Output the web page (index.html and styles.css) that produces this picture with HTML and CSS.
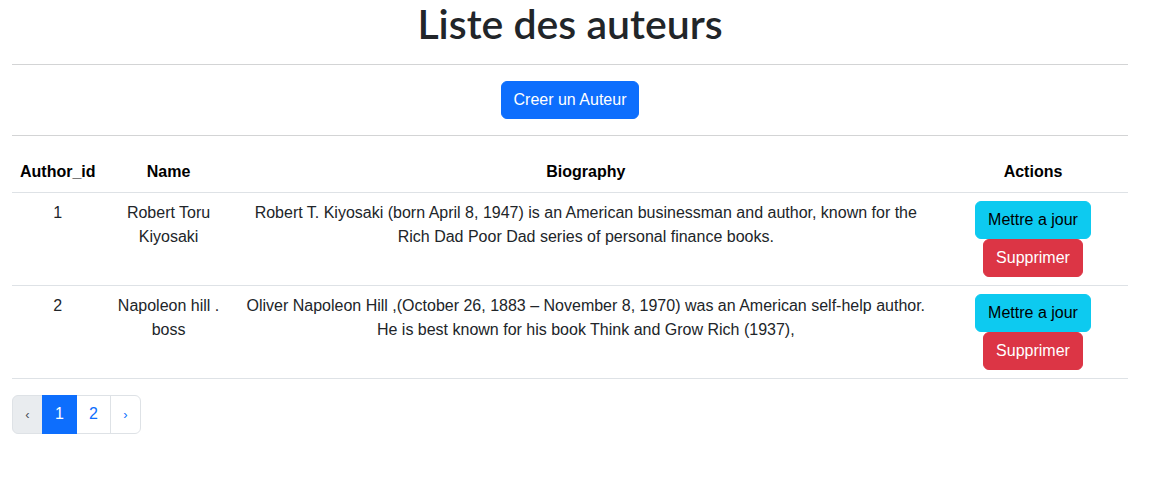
FILE: index.html
```html
<!DOCTYPE html>
<html lang="fr">
<head>
<meta charset="utf-8">
<title>Liste des auteurs</title>
<link rel="stylesheet" href="styles.css">
</head>
<body>
<div class="container">
  <h1 class="title">Liste des auteurs</h1>
  <hr class="sep">
  <div class="create">
    <a class="btn btn-primary" href="#">Creer un Auteur</a>
  </div>
  <hr class="sep">
  <table class="table">
    <thead>
      <tr>
        <th class="c-id">Author_id</th>
        <th class="c-name">Name</th>
        <th class="c-bio">Biography</th>
        <th class="c-act">Actions</th>
      </tr>
    </thead>
    <tbody>
      <tr>
        <td>1</td>
        <td>Robert Toru Kiyosaki</td>
        <td>Robert T. Kiyosaki (born April 8, 1947) is an American businessman and author, known for the Rich Dad Poor Dad series of personal finance books.</td>
        <td>
          <div class="actions">
            <a class="btn btn-info" href="#">Mettre a jour</a>
            <button class="btn btn-danger" type="button">Supprimer</button>
          </div>
        </td>
      </tr>
      <tr>
        <td>2</td>
        <td>Napoleon hill . boss</td>
        <td>Oliver Napoleon Hill ,(October 26, 1883 – November 8, 1970) was an American self-help author. He is best known for his book Think and Grow Rich (1937),</td>
        <td>
          <div class="actions">
            <a class="btn btn-info" href="#">Mettre a jour</a>
            <button class="btn btn-danger" type="button">Supprimer</button>
          </div>
        </td>
      </tr>
    </tbody>
  </table>
  <nav class="pagination">
    <span class="page-item disabled"><span class="chev">‹</span></span>
    <a class="page-item active" href="#">1</a>
    <a class="page-item" href="#">2</a>
    <a class="page-item" href="#"><span class="chev">›</span></a>
  </nav>
</div>
</body>
</html>
```

FILE: styles.css
```css
* { box-sizing: border-box; }
body {
  margin: 0;
  font-family: "Liberation Sans", Arial, sans-serif;
  font-size: 16px;
  line-height: 1.5;
  color: #212529;
  background: #fff;
}
.container {
  width: 1140px;
  padding: 0 12px;
}
.title {
  margin: 0;
  font-family: Lato, "Liberation Sans", sans-serif;
  font-size: 41px;
  font-weight: 600;
  line-height: 48px;
  text-align: center;
}
.sep {
  margin: 16px 0;
  border: 0;
  border-top: 1px solid #d3d4d5;
  height: 0;
}
.create { text-align: center; }
.btn {
  display: inline-block;
  padding: 6px 12px;
  font-family: inherit;
  font-size: 16px;
  line-height: 24px;
  border: 1px solid transparent;
  border-radius: 6px;
  text-decoration: none;
  cursor: pointer;
}
.btn-primary { background: #0d6efd; border-color: #0d6efd; color: #fff; }
.btn-info { background: #0dcaf0; border-color: #0dcaf0; color: #000; }
.btn-danger { background: #dc3545; border-color: #dc3545; color: #fff; }
.table {
  width: 100%;
  border-collapse: collapse;
  margin-bottom: 16px;
  text-align: center;
}
.table th, .table td {
  padding: 8px;
  border-bottom: 1px solid #dee2e6;
  vertical-align: top;
}
.table th { color: #000; font-weight: 700; vertical-align: bottom; }
.c-id { width: 90px; }
.c-name { width: 130px; }
.c-act { width: 190px; }
.actions {
  display: flex;
  flex-direction: column;
  align-items: center;
}
.pagination {
  display: flex;
}
.page-item {
  display: block;
  padding: 6px 12px;
  line-height: 24px;
  font-size: 16px;
  color: #0d6efd;
  text-decoration: none;
  border: 1px solid #dee2e6;
  margin-left: -1px;
}
.chev { font-size: 13px; display: inline-block; width: 5px; text-align: center; }
.page-item:first-child { margin-left: 0; border-radius: 6px 0 0 6px; }
.page-item:last-child { border-radius: 0 6px 6px 0; }
.page-item.disabled { background: #e9ecef; color: #495057; }
.page-item.active { background: #0d6efd; border-color: #0d6efd; color: #fff; position: relative; }
```
